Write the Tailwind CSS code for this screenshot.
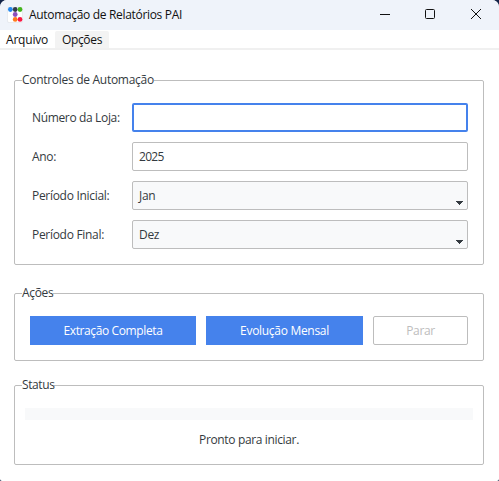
<!DOCTYPE html>
<html lang="pt-BR">
<head>
<meta charset="utf-8">
<title>Automação de Relatórios PAI</title>
<script src="https://cdn.jsdelivr.net/npm/@tailwindcss/browser@4"></script>
</head>
<body class="bg-[#132449] font-['Open_Sans','Noto_Sans',sans-serif] text-[12px] leading-[17px] text-[#343a40]">
<main class="flex h-[481px] w-[499px] flex-col overflow-hidden rounded-t-[7px] rounded-b-[2px] bg-white">
  <header class="flex h-[30px] shrink-0 items-center bg-[#eff3fa] pl-[7px] text-[#111]">
    <svg class="mr-[6px] h-4 w-4 shrink-0" viewBox="0 0 16 16">
      <rect x=".5" y=".5" width="15" height="15" rx="1.5" fill="#fff" stroke="#dde0e6" stroke-width=".6"/>
      <circle cx="3.4" cy="2.5" r="2.4" fill="#2388ee"/><circle cx="8.2" cy="2.5" r="2.4" fill="#343b48"/><circle cx="13" cy="2.5" r="2.4" fill="#43b51c"/>
      <circle cx="8.2" cy="7.5" r="2.4" fill="#8b50bc"/><circle cx="8.2" cy="12.4" r="2.4" fill="#ff7a1c"/><circle cx="13" cy="12.4" r="2.4" fill="#fa1744"/>
    </svg>
    <h1 class="-mt-px whitespace-nowrap tracking-[-0.32px]">Automação de Relatórios PAI</h1>
    <svg class="ml-auto h-[30px] w-[139px] shrink-0" viewBox="0 0 139 30" fill="none" stroke="#111">
      <path d="M20 14.5h10"/><rect x="65.5" y="9.5" width="9" height="9" rx="1"/><path d="M111 9l10 10M121 9l-10 10"/>
    </svg>
  </header>
  <nav class="flex h-5 shrink-0 border-b-2 border-[#f0f0f0] text-[#111]">
    <span class="w-[55px] pt-px pl-[6px] tracking-[-0.2px]">Arquivo</span>
    <span class="mt-px h-[17px] w-[54px] rounded-t-[2px] bg-[#f3f3f3] pl-[7px] tracking-[-0.35px]">Opções</span>
  </nav>
  <div class="flex flex-col gap-5 px-[14px] pt-[22px] pr-[15px]">
    <fieldset class="h-[193px] rounded-[2px] border border-[#bdbdbd] pt-[14px] pr-[15px] pl-[17px]">
      <legend class="ml-[-10px] h-[17px] whitespace-nowrap tracking-[-0.29px]"><span class="relative -top-px">Controles de Automação</span></legend>
      <div class="grid grid-cols-[100px_336px] gap-y-[10px] tracking-[-0.3px]">
        <label class="self-center whitespace-nowrap tracking-[-0.35px]">Número da Loja:</label>
        <div class="h-[29px] rounded-[2px] border-2 border-[#4582ec]"></div>
        <label class="self-center">Ano:</label>
        <div class="flex h-[29px] items-center rounded-[2px] border border-[#bdbdbd] pl-[6px] tracking-[-0.7px]">2025</div>
        <label class="self-center whitespace-nowrap">Período Inicial:</label>
        <div class="flex h-[29px] items-center rounded-[2px] border border-[#bdbdbd] bg-[#f8f9fa] pr-1 pl-[6px]">Jan
          <svg class="mt-[15px] ml-auto h-4 w-[7px]" viewBox="0 0 7 16" shape-rendering="crispEdges"><path d="M0 6h7v1h-1v1h-1v1h-1v1h-1v-1h-1v-1h-1v-1h-1z" fill="#343a40"/></svg>
        </div>
        <label class="self-center whitespace-nowrap">Período Final:</label>
        <div class="flex h-[29px] items-center rounded-[2px] border border-[#bdbdbd] bg-[#f8f9fa] pr-1 pl-[6px]">Dez
          <svg class="mt-[15px] ml-auto h-4 w-[7px]" viewBox="0 0 7 16" shape-rendering="crispEdges"><path d="M0 6h7v1h-1v1h-1v1h-1v1h-1v-1h-1v-1h-1v-1h-1z" fill="#343a40"/></svg>
        </div>
      </div>
    </fieldset>
    <fieldset class="h-[76px] rounded-[2px] border border-[#bdbdbd] pt-[14px] pl-[15px]">
      <legend class="ml-[-8px] h-[17px] tracking-[-0.35px]"><span class="relative -top-px">Ações</span></legend>
      <div class="flex gap-[10px] tracking-[-0.38px]">
        <button class="h-[29px] w-[166px] bg-[#4582ec] text-white">Extração Completa</button>
        <button class="h-[29px] w-[157px] bg-[#4582ec] text-white tracking-[-0.3px]">Evolução Mensal</button>
        <button class="h-[29px] w-[95px] rounded-[2px] border border-[#bdbdbd] text-[#bdbdbd]" disabled>Parar</button>
      </div>
    </fieldset>
    <fieldset class="-mt-[4px] h-[88px] rounded-[2px] border border-[#bdbdbd] pt-[14px] pr-[10px] pl-[10px]">
      <legend class="ml-[-3px] h-[17px] tracking-[-0.4px]"><span class="relative -top-px">Status</span></legend>
      <div class="h-[12px] bg-[#f8f9fa]"></div>
      <p class="mt-[11px] text-center tracking-[-0.35px]">Pronto para iniciar.</p>
    </fieldset>
  </div>
</main>
</body>
</html>
